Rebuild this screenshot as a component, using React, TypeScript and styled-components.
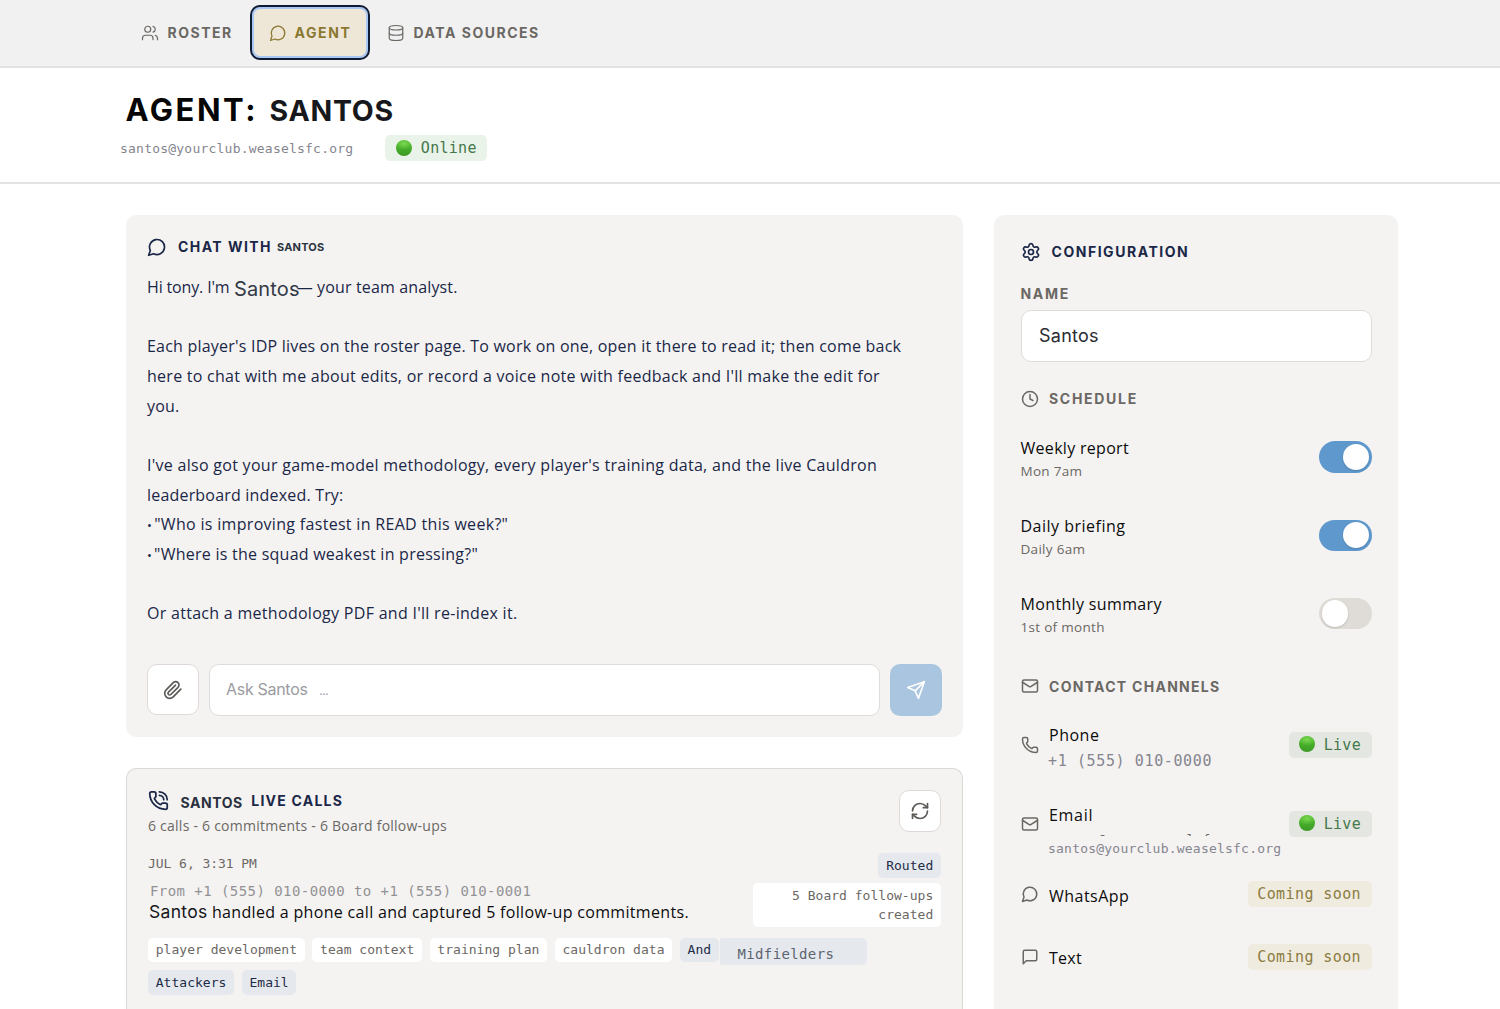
import React from "react";
import styled, { createGlobalStyle, css } from "styled-components";
import {
  Users, Database, PhoneCall, RefreshCw, Settings, Clock, Mail, Phone,
} from "lucide-react";

const heading = css`font-family: Inter, "Liberation Sans", sans-serif;`;
const body = css`font-family: "Open Sans", "Noto Sans", sans-serif;`;
const mono = css`font-family: "DejaVu Sans Mono", "Liberation Mono", monospace;`;

const ink = "#1b2747";
const muted = "#6b6864";

const Global = createGlobalStyle`
  *, *::before, *::after { box-sizing: border-box; }
  html { overflow: hidden; }
  body { margin: 0; background: #fff; font-size: 16px; }
  svg { display: block; flex: none; }
`;

const Page = styled.div`
  display: flex;
  flex-direction: column;
  height: 1009px;
  overflow: hidden;
`;

type IconProps = { size: number; strokeWidth?: number };

function icon(paths: string[]) {
  return function Icon({ size, strokeWidth = 2 }: IconProps) {
    return (
      <svg width={size} height={size} viewBox="0 0 24 24" fill="none" stroke="currentColor"
        strokeWidth={strokeWidth} strokeLinecap="round" strokeLinejoin="round">
        {paths.map((d) => <path key={d} d={d} />)}
      </svg>
    );
  };
}

const Bubble = icon(["M7.9 20A9 9 0 1 0 4 16.1L2 22Z"]);
const SquareBubble = icon(["M21 15a2 2 0 0 1-2 2H7l-4 4V5a2 2 0 0 1 2-2h14a2 2 0 0 1 2 2z"]);
const Clip = icon(["m21.44 11.05-9.19 9.19a6 6 0 0 1-8.49-8.49l8.57-8.57A4 4 0 1 1 18 8.84l-8.59 8.57a2 2 0 0 1-2.83-2.83l8.49-8.48"]);
const Plane = icon(["m22 2-7 20-4-9-9-4Z", "M22 2 11 13"]);

const Nav = styled.nav`
  display: flex;
  align-items: flex-start;
  flex: none;
  height: 68px;
  padding: 5px 0 0 124px;
  background: #f1f1f1;
  border-bottom: 2px solid #e2e2e1;
`;

const Tab = styled.button<{ $active?: boolean; $w: number; $ls: number }>`
  ${heading}
  display: flex;
  align-items: center;
  gap: ${(p) => (p.$active ? 7.5 : 8.5)}px;
  width: ${(p) => p.$w}px;
  height: 55px;
  padding: 0 0 0 ${(p) => (p.$active ? 17 : 15)}px;
  border: 2px solid ${(p) => (p.$active ? "#0e1b33" : "transparent")};
  border-radius: 10px;
  background: ${(p) => (p.$active ? "#eee7d8" : "transparent")};
  box-shadow: ${(p) => (p.$active ? "inset 0 0 0 2px #a9c7f3" : "none")};
  color: ${(p) => (p.$active ? "#8b7830" : muted)};
  font-size: 14px;
  font-weight: 700;
  letter-spacing: ${(p) => p.$ls}px;
  line-height: 20px;
  white-space: nowrap;
`;

const PageHeader = styled.header`
  flex: none;
  height: 116px;
  padding: 22px 0 0 120px;
  border-bottom: 2px solid #e2e2e1;
  background: #fff;
`;

const Title = styled.h1`
  ${heading}
  display: flex;
  align-items: center;
  gap: 11.5px;
  height: 38px;
  margin: 0 0 0 5.5px;
  color: #060606;
  font-size: 31px;
  font-weight: 700;
  letter-spacing: 2.5px;
`;

const TitleName = styled.span`
  margin-top: 2px;
  color: #17181c;
  font-size: 28.5px;
  letter-spacing: 0.7px;
`;

const Status = styled.div`
  display: flex;
  align-items: center;
  gap: 31.5px;
  margin-top: 7px;
`;

const Address = styled.span`
  ${mono}
  padding-top: 2px;
  color: #85858f;
  font-size: 13px;
  letter-spacing: 0.22px;
  line-height: 18px;
  white-space: nowrap;
`;

const Badge = styled.span<{ $tone: "online" | "live" | "soon" }>`
  ${mono}
  display: flex;
  align-items: center;
  height: 26px;
  padding: 0 10.5px 0 ${(p) => ({ online: 11, live: 10, soon: 9.5 })[p.$tone]}px;
  border-radius: 5px;
  font-size: 15px;
  letter-spacing: ${(p) => (p.$tone === "soon" ? 0.4 : 0.28)}px;
  white-space: nowrap;
  background: ${(p) => ({ online: "#eaf3ea", live: "#e4e7e1", soon: "#f0ebdf" })[p.$tone]};
  color: ${(p) => (p.$tone === "soon" ? "#8b7c42" : "#44784a")};
`;

const Dot = styled.i`
  width: 16px;
  height: 16px;
  margin: -1px 9px 0 0;
  border-radius: 50%;
  background: radial-gradient(ellipse 60% 38% at 50% 22%, #79d84f, rgba(121, 216, 79, 0)),
    linear-gradient(#4fb52f, #46ac2a 55%, #3c9a25);
`;

const Main = styled.main`
  display: grid;
  grid-template-columns: 837px 403.5px;
  column-gap: 31px;
  align-items: stretch;
  flex: 1;
  min-height: 0;
  padding: 31px 0 0 126px;
`;

const Column = styled.div`
  display: flex;
  flex-direction: column;
  gap: 31px;
  min-height: 0;
`;

const Card = styled.section`
  border-radius: 10px;
  background: #f4f3f2;
`;

const ChatCard = styled(Card)`
  flex: none;
  height: 522px;
  padding: 21px;
`;

const CardTitle = styled.h2<{ $ls: number }>`
  ${heading}
  display: flex;
  align-items: center;
  height: 21px;
  margin: 0;
  color: ${ink};
  font-size: 14px;
  font-weight: 700;
  letter-spacing: ${(p) => p.$ls}px;
  white-space: nowrap;
  svg { margin-right: 11px; }
`;

const SmallName = styled.span`
  margin-left: 5px;
  color: #2c3340;
  font-size: 11px;
  letter-spacing: 0.18px;
`;

const Message = styled.div`
  ${body}
  margin-top: 16px;
  color: ${ink};
`;

const Line = styled.div<{ $ls?: number }>`
  height: 29.67px;
  line-height: 29.67px;
  letter-spacing: ${(p) => p.$ls ?? 0.22}px;
  white-space: pre;
`;

const Bullet = styled.span`
  margin-right: -2.5px;
  font-size: 13px;
`;

const LineEnd = styled.span`
  margin-left: -1px;
  letter-spacing: 0.14px;
`;

const InlineName = styled.span`
  ${heading}
  position: relative;
  top: 3px;
  margin: 0 -2px 0 4.5px;
  color: #333946;
  font-size: 20px;
  letter-spacing: 0.15px;
  line-height: 20px;
`;

const Composer = styled.div`
  display: flex;
  gap: 10.5px;
  margin-top: 35px;
`;

const SquareButton = styled.button<{ $size: number; $filled?: boolean }>`
  display: flex;
  align-items: center;
  justify-content: center;
  flex: none;
  width: ${(p) => p.$size}px;
  height: ${(p) => p.$size}px;
  padding: 0;
  border: ${(p) => (p.$filled ? "0" : "1px solid #dfdad7")};
  border-radius: 10px;
  background: ${(p) => (p.$filled ? "#a9c5df" : "#fff")};
  color: ${(p) => (p.$filled ? "#fff" : "#5d5a57")};
`;

const Field = styled.div<{ $tone: "placeholder" | "value" }>`
  ${heading}
  display: flex;
  align-items: center;
  flex: 1;
  height: 52px;
  border: 1px solid #dfdcd9;
  border-radius: 10px;
  background: #fff;
  white-space: pre;
  ${(p) =>
    p.$tone === "value"
      ? css`padding: 0 0 1px 17.5px; color: #2b2c31; font-size: 18px; letter-spacing: 0.25px;`
      : css`padding: 0 0 1px 16px; color: #9b9ba2; font-size: 16px; letter-spacing: -0.3px;`}
`;

const Ellipsis = styled.span`
  ${body}
  margin: 2px 0 0 12px;
  font-size: 11px;
  font-weight: 600;
`;

const CallsCard = styled(Card)`
  flex: 1;
  min-height: 0;
  padding: 20.5px 21px 0;
  border: 1px solid #d9d8d5;
  border-bottom: 0;
  border-radius: 10px 10px 0 0;
`;

const CallsTop = styled.div`
  display: flex;
  justify-content: space-between;
  height: 63.5px;
`;

const CallsName = styled.span`
  margin: 4px 8.5px 0 0.5px;
  color: #2a303e;
  letter-spacing: 0.55px;
`;

const Summary = styled.p`
  ${body}
  margin: 4.5px 0 0;
  color: ${muted};
  font-size: 14px;
  letter-spacing: 0.24px;
  line-height: 22px;
`;

const Call = styled.div`
  display: flex;
  justify-content: space-between;
`;

const CallInfo = styled.div`
  padding-top: 0.5px;
  white-space: nowrap;
`;

const CallTime = styled.div`
  ${mono}
  color: ${muted};
  font-size: 13px;
  line-height: 19px;
  letter-spacing: -0.05px;
`;

const CallRoute = styled.div`
  ${mono}
  margin: 8px 0 0 2px;
  color: #929294;
  font-size: 14px;
  line-height: 20px;
  letter-spacing: 0.44px;
`;

const CallText = styled.div`
  ${body}
  display: flex;
  align-items: center;
  gap: 4.5px;
  height: 22px;
  margin-left: 1px;
  color: #0c0c0c;
  letter-spacing: 0.32px;
`;

const CallAgent = styled.span`
  ${heading}
  color: #16171b;
  font-size: 17.5px;
  letter-spacing: 0.3px;
`;

const CallState = styled.div`
  display: flex;
  flex-direction: column;
  align-items: flex-end;
  gap: 5.5px;
  width: 188px;
`;

const Chip = styled.span<{ $blue?: boolean }>`
  ${mono}
  display: block;
  padding: 2.5px 7.75px;
  border-radius: 5px;
  background: ${(p) => (p.$blue ? "#e5e9ed" : "#fff")};
  color: ${(p) => (p.$blue ? "#1f2b48" : muted)};
  font-size: 13px;
  line-height: 19.5px;
  letter-spacing: 0.02px;
  text-align: right;
`;

const Chips = styled.div`
  display: flex;
  flex-wrap: wrap;
  gap: 8px 7.6px;
  margin-top: 10.5px;
`;

const WideChip = styled.span`
  ${mono}
  width: 147px;
  height: 27px;
  margin: 0 0 -2.5px -6px;
  padding: 4px 0 0 17px;
  border-radius: 2px 5px 5px 2px;
  background: #e5e9ed;
  color: #5b6470;
  font-size: 14px;
  line-height: 25px;
  letter-spacing: 0.37px;
`;

const ConfigCard = styled(Card)`
  min-height: 0;
  padding: 26px 26px 0 26.5px;
  border-radius: 10px 10px 0 0;
`;

const Label = styled.div<{ $ls: number }>`
  ${heading}
  display: flex;
  align-items: center;
  gap: 10.5px;
  height: 20px;
  color: ${muted};
  font-size: 14px;
  font-weight: 700;
  letter-spacing: ${(p) => p.$ls}px;
  white-space: nowrap;
`;

const NameGroup = styled.div`
  display: flex;
  flex-direction: column;
  gap: 6px;
  margin: 21.5px 0 27px;
`;

const NameField = styled(Field)`
  flex: none;
`;

const ScheduleRow = styled.div`
  ${body}
  display: flex;
  align-items: center;
  justify-content: space-between;
  height: 78.2px;
`;

const ScheduleText = styled.div`
  padding-top: 4px;
`;

const RowName = styled.div<{ $ls?: number }>`
  ${body}
  color: #0c0c0c;
  font-size: 16px;
  line-height: 24px;
  letter-spacing: ${(p) => p.$ls ?? 0.35}px;
`;

const RowNote = styled.div`
  color: ${muted};
  font-size: 13.5px;
  line-height: 22px;
  letter-spacing: 0.3px;
`;

const Switch = styled.span<{ $on?: boolean }>`
  display: flex;
  justify-content: ${(p) => (p.$on ? "flex-end" : "flex-start")};
  width: 52.5px;
  height: 31.5px;
  padding: 2.6px;
  border-radius: 16px;
  background: ${(p) => (p.$on ? "#5f98cd" : "#dfdcd7")};
  &::after {
    content: "";
    width: 26.3px;
    height: 26.3px;
    border-radius: 50%;
    background: #fff;
    box-shadow: 0 1px 2px rgba(0, 0, 0, 0.15);
  }
`;

const Schedule = styled.div`
  margin: 9.5px 0 23.5px;
`;

const Channel = styled.div<{ $h: number }>`
  display: flex;
  align-items: center;
  height: ${(p) => p.$h}px;
  color: ${muted};
`;

const ChannelInfo = styled.div<{ $shift?: number }>`
  flex: 1;
  width: 0;
  margin-left: 10.5px;
  padding-top: ${(p) => p.$shift ?? 0}px;
  white-space: nowrap;
`;

const PhoneNumber = styled.div`
  ${mono}
  margin-left: -1px;
  color: #85858f;
  font-size: 15px;
  line-height: 28px;
  letter-spacing: 0.62px;
`;

const ClippedAddress = styled.div`
  ${mono}
  height: 3px;
  margin: 6px 0 0 1px;
  overflow: hidden;
  color: ${muted};
  font-size: 13px;
  line-height: 14px;
  letter-spacing: 0.2px;
`;

const ChannelAddress = styled(Address)`
  display: block;
  margin: 2px 0 0 -1px;
`;

const topics = ["player development", "team context", "training plan", "cauldron data"];

export default function App() {
  return (
    <Page>
      <Global />
      <Nav>
        <Tab $w={126} $ls={1.5}><Users size={18} strokeWidth={1.6} />ROSTER</Tab>
        <Tab $active $w={120} $ls={1.6}><Bubble size={18} strokeWidth={1.7} />AGENT</Tab>
        <Tab $w={180} $ls={1.52}><Database size={18} strokeWidth={1.6} />DATA SOURCES</Tab>
      </Nav>
      <PageHeader>
        <Title>AGENT:<TitleName>SANTOS</TitleName></Title>
        <Status>
          <Address>santos@yourclub.weaselsfc.org</Address>
          <Badge $tone="online"><Dot />Online</Badge>
        </Status>
      </PageHeader>
      <Main>
        <Column>
          <ChatCard>
            <CardTitle $ls={1.45}>
              <Bubble size={20} />CHAT WITH<SmallName>SANTOS</SmallName>
            </CardTitle>
            <Message>
              <Line $ls={-0.15}>Hi tony. I'm<InlineName>Santos</InlineName><LineEnd>— your team analyst.</LineEnd></Line>
              <Line> </Line>
              <Line $ls={0.215}>Each player's IDP lives on the roster page. To work on one, open it there to read it; then come back</Line>
              <Line $ls={0.265}>here to chat with me about edits, or record a voice note with feedback and I'll make the edit for</Line>
              <Line>you.</Line>
              <Line> </Line>
              <Line $ls={0.285}>I've also got your game-model methodology, every player's training data, and the live Cauldron</Line>
              <Line $ls={0.19}>leaderboard indexed. Try:</Line>
              <Line $ls={0.31}><Bullet>•</Bullet> "Who is improving fastest in READ this week?"</Line>
              <Line $ls={0.25}><Bullet>•</Bullet> "Where is the squad weakest in pressing?"</Line>
              <Line> </Line>
              <Line $ls={0.29}>Or attach a methodology PDF and I'll re-index it.</Line>
            </Message>
            <Composer>
              <SquareButton $size={51.5}><Clip size={20} /></SquareButton>
              <Field $tone="placeholder">Ask Santos<Ellipsis>…</Ellipsis></Field>
              <SquareButton $size={52} $filled><Plane size={20} /></SquareButton>
            </Composer>
          </ChatCard>
          <CallsCard>
            <CallsTop>
              <div>
                <CardTitle $ls={1.24}>
                  <PhoneCall size={21} strokeWidth={2} /><CallsName>SANTOS</CallsName>LIVE CALLS
                </CardTitle>
                <Summary>6 calls - 6 commitments - 6 Board follow-ups</Summary>
              </div>
              <SquareButton $size={42}><RefreshCw size={20} strokeWidth={2} /></SquareButton>
            </CallsTop>
            <Call>
              <CallInfo>
                <CallTime>JUL 6, 3:31 PM</CallTime>
                <CallRoute>From +1 (555) 010-0000 to +1 (555) 010-0001</CallRoute>
                <CallText><CallAgent>Santos</CallAgent>handled a phone call and captured 5 follow-up commitments.</CallText>
              </CallInfo>
              <CallState>
                <Chip $blue>Routed</Chip>
                <Chip>5 Board follow-ups created</Chip>
              </CallState>
            </Call>
            <Chips>
              {topics.map((t) => <Chip key={t}>{t}</Chip>)}
              <Chip $blue>And</Chip>
              <WideChip>Midfielders</WideChip>
              <Chip $blue>Attackers</Chip>
              <Chip $blue>Email</Chip>
            </Chips>
          </CallsCard>
        </Column>
        <ConfigCard>
          <CardTitle $ls={1.53}><Settings size={20} strokeWidth={2} />CONFIGURATION</CardTitle>
          <NameGroup>
            <Label $ls={1.7}>NAME</Label>
            <NameField $tone="value">Santos</NameField>
          </NameGroup>
          <Label $ls={1.7}><Clock size={18} strokeWidth={2} />SCHEDULE</Label>
          <Schedule>
            <ScheduleRow>
              <ScheduleText><RowName $ls={0.3}>Weekly report</RowName><RowNote>Mon 7am</RowNote></ScheduleText>
              <Switch $on />
            </ScheduleRow>
            <ScheduleRow>
              <ScheduleText><RowName $ls={0.5}>Daily briefing</RowName><RowNote>Daily 6am</RowNote></ScheduleText>
              <Switch $on />
            </ScheduleRow>
            <ScheduleRow>
              <ScheduleText><RowName>Monthly summary</RowName><RowNote>1st of month</RowNote></ScheduleText>
              <Switch />
            </ScheduleRow>
          </Schedule>
          <Label $ls={1.28}><Mail size={18} strokeWidth={2} />CONTACT CHANNELS</Label>
          <Channel $h={97}>
            <Phone size={18} strokeWidth={2} />
            <ChannelInfo $shift={9}>
              <RowName $ls={0.5}>Phone</RowName>
              <PhoneNumber>+1 (555) 010-0000</PhoneNumber>
            </ChannelInfo>
            <Badge $tone="live"><Dot />Live</Badge>
          </Channel>
          <Channel $h={61}>
            <Mail size={18} strokeWidth={2} />
            <ChannelInfo $shift={13}>
              <RowName $ls={0.7}>Email</RowName>
              <ClippedAddress>samson@your.weaselsfc.org</ClippedAddress>
              <ChannelAddress>santos@yourclub.weaselsfc.org</ChannelAddress>
            </ChannelInfo>
            <Badge $tone="live"><Dot />Live</Badge>
          </Channel>
          <Channel $h={79.5}>
            <Bubble size={18} />
            <ChannelInfo $shift={4}><RowName $ls={0.47}>WhatsApp</RowName></ChannelInfo>
            <Badge $tone="soon">Coming soon</Badge>
          </Channel>
          <Channel $h={46}>
            <SquareBubble size={18} />
            <ChannelInfo $shift={3}><RowName $ls={0.28}>Text</RowName></ChannelInfo>
            <Badge $tone="soon">Coming soon</Badge>
          </Channel>
        </ConfigCard>
      </Main>
    </Page>
  );
}
